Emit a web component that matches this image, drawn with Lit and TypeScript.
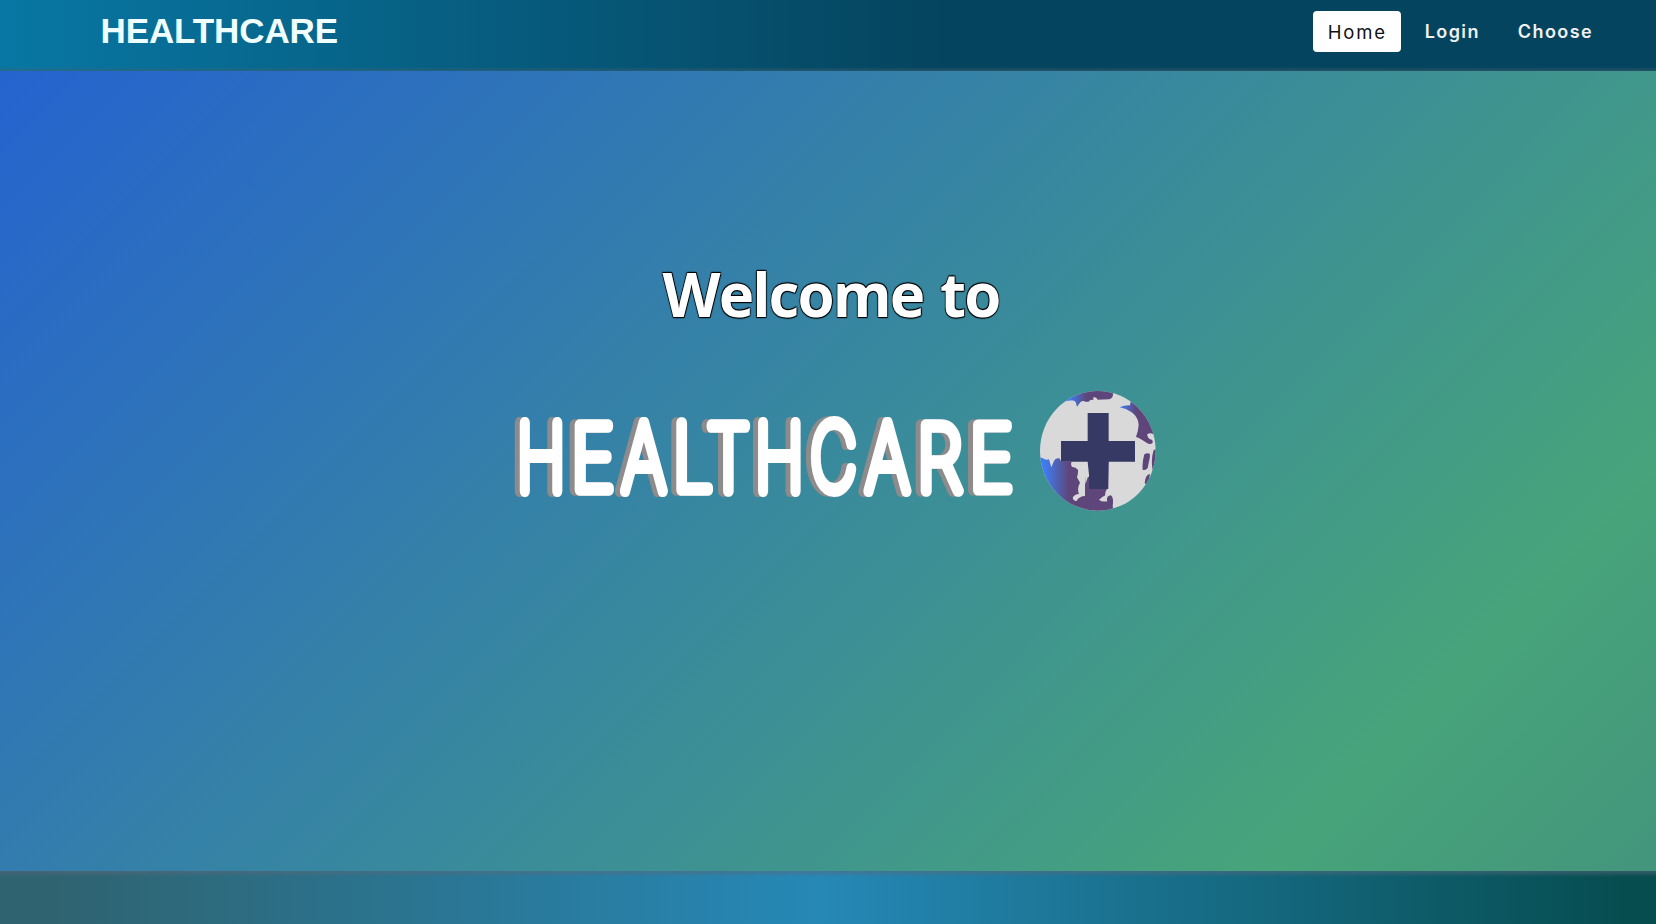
import { LitElement, html, css, svg } from "lit";
import { customElement } from "lit/decorators.js";

// [letter, left, right, top, bottom] outer edges inside the 510 x 100 mark
const LETTERS: [string, number, number, number, number][] = [
  ["H", 8.6, 53.8, 11.3, 90.4], ["E", 64, 105, 13.5, 88.9], ["A", 108.8, 158.9, 11.3, 90.4],
  ["L", 165.3, 203.6, 11.3, 88.9], ["T", 195.7, 241.2, 13.5, 90.4], ["H", 247, 292.2, 11.3, 90.4],
  ["C", 299.8, 347.7, 11.3, 90.4], ["A", 352.3, 402.5, 11.3, 90.4], ["R", 410, 454.5, 13.5, 90.4],
  ["E", 462.3, 503.7, 13.5, 88.9],
];
const STROKE = 10.4;
const SIZE = 100;

@customElement("word-mark")
class WordMark extends LitElement {
  static styles = css`
    :host { display: block; width: 510px; height: 100px; }
    svg { display: block; overflow: visible; filter: drop-shadow(-5px 0 0 #8d8b8b); }
    text { font: 100 100px Inter, sans-serif; fill: #fff; stroke: #fff; stroke-width: 10.4px; stroke-linejoin: round; stroke-linecap: round; vector-effect: non-scaling-stroke; }
  `;
  render() {
    const ctx = document.createElement("canvas").getContext("2d")!;
    ctx.font = `100 ${SIZE}px Inter, sans-serif`;
    const h = STROKE / 2;
    return html`<svg width="510" height="100" viewBox="0 0 510 100">${LETTERS.map(([c, l, r, t, b]) => {
      const m = ctx.measureText(c);
      const sx = (r - l - STROKE) / (m.actualBoundingBoxRight + m.actualBoundingBoxLeft);
      const sy = (b - t - STROKE) / (m.actualBoundingBoxAscent + m.actualBoundingBoxDescent);
      const x = l + h + m.actualBoundingBoxLeft * sx;
      const y = b - h - m.actualBoundingBoxDescent * sy;
      return svg`<text transform="translate(${x} ${y}) scale(${sx} ${sy})">${c}</text>`;
    })}</svg>`;
  }
}

@customElement("globe-mark")
class GlobeMark extends LitElement {
  static styles = css`:host { display: block; } svg { display: block; }`;
  render() {
    return html`<svg width="136" height="140" viewBox="0 0 408 420">
      <defs>
        <clipPath id="disc"><ellipse cx="203.500" cy="212.500" rx="173.500" ry="179.500"/></clipPath>
        <linearGradient id="l" gradientUnits="userSpaceOnUse" x1="45" y1="0" x2="118" y2="0"><stop offset="0" stop-color="#407bf0"/><stop offset="1" stop-color="#5e467a"/></linearGradient>
        <linearGradient id="t" gradientUnits="userSpaceOnUse" x1="120" y1="0" x2="170" y2="0"><stop offset="0" stop-color="#407bf0"/><stop offset="1" stop-color="#5e467a"/></linearGradient>
        <linearGradient id="r" gradientUnits="userSpaceOnUse" x1="272" y1="0" x2="318" y2="0"><stop offset="0" stop-color="#407bf0"/><stop offset="1" stop-color="#5e467a"/></linearGradient>
      </defs>
      <ellipse cx="203.500" cy="212.500" rx="173.500" ry="179.500" fill="#d9d9d9"/>
      <g clip-path="url(#disc)">
        <path fill="url(#t)" d="M105 64 C122 61 131 60 137 66 L141 80 L151 67 Q158 60 166 65 L176 65 Q180 58 190 60 L190 52 Q199 50 203 59 L238 58 Q249 55 249 43 L246 25 H120Z"/>
        <path fill="url(#r)" d="M269 82 Q280 76 300 76 L302 65 H345 L385 160 L369 162 Q359 157 351 164 Q354 174 360 178 Q369 178 368 188 Q362 195 352 190 C342 183 329 174 318 171 Q325 152 326 134 Q324 111 305 97 Q288 85 269 82Z"/>
        <path fill="#5e467a" d="M343 223 Q352 217 359 221 Q361 229 358 239 L353 264 Q346 273 338 269 Q336 247 343 223Z M371 210 L382 206 V270 H368 Q362 238 371 210Z M360 282 Q346 284 344 309 Q349 317 355 309Z"/>
        <path fill="url(#l)" d="M25 230 L39 235 Q47 242 57 238 L64 262 L71 245 Q75 234 88 235 L94 245 H125 Q121 253 126 261 Q136 260 144 269 Q145 281 141 292 L150 308 Q140 325 147 342 Q132 343 128 354 Q132 366 140 362 Q149 348 165 348 L165 290 H178 V246 H235 V327 H231 Q224 336 226 346 Q214 352 207 359 Q216 367 232 364 Q227 349 242 346 Q252 351 248 378 L252 398 H100 L25 320Z"/>
        <path fill="#d9d9d9" d="M164 246 H177 V288 Q172 291 170 302 L166 312Z"/>
      </g>
      <path fill="#363963" d="M173 99 H236 V183 H315 V245 H236 L234 327 H177 V284 L173 245 H93 V183 H173Z"/>
    </svg>`;
  }
}

@customElement("app-root")
class AppRoot extends LitElement {
  static styles = css`
    :host { display: flex; flex-direction: column; width: 100%; height: 924px; overflow: hidden; font-family: Inter, sans-serif; }
    header { box-sizing: border-box; height: 71px; flex: none; display: flex; justify-content: space-between; padding: 11px 49px 0 100.5px;
      background: linear-gradient(transparent 67px, #41616e88 71px), linear-gradient(90deg, #0877a3 0%, #05445e 57%); }
    .brand { font: 700 35px/39px "Liberation Sans", sans-serif; color: #f0ffff; letter-spacing: -0.1px; }
    nav { display: flex; align-items: flex-start; gap: 9px; }
    nav a { box-sizing: border-box; height: 41px; line-height: 42px; padding: 0 14px 0 15px; border-radius: 4px; font-size: 18px; font-weight: 600; letter-spacing: 1.4px; color: #f0f0f0; white-space: nowrap; }
    nav a.on { background: #fff; color: #111; font-weight: 400; font-size: 18.5px; letter-spacing: 1.8px; }
    main { flex: none; height: 800px; display: flex; flex-direction: column; align-items: center; background: linear-gradient(135deg, #2563cf 0%, #47a47a 84%, #43957c 100%); }
    h1 { margin: 182px 0 0 6px; font: 700 60px/82px "Open Sans", "Noto Sans", sans-serif; letter-spacing: -1.9px; word-spacing: 3px; color: #fff; text-shadow: 0.6px 0.6px 1px #000, -0.6px 0.6px 1px #000, 0.6px -0.6px 1px #000, -0.6px -0.6px 1px #000; white-space: nowrap; }
    .logo { display: flex; margin-top: 45px; width: 656px; align-self: flex-start; margin-left: 510px; }
    .logo word-mark { margin-top: 26px; margin-right: 10px; }
    footer { flex: 1; background: linear-gradient(#5a677a88 0, #5a677a66 2px, transparent 6px), linear-gradient(90deg, #2f6370 0%, #2f6370 3%, #2688b6 49.5%, #064d50 98%); }
  `;
  render() {
    return html`
      <header><div class="brand">HEALTHCARE</div>
        <nav><a class="on">Home</a><a>Login</a><a>Choose</a></nav></header>
      <main><h1>Welcome to</h1><div class="logo"><word-mark></word-mark><globe-mark></globe-mark></div></main>
      <footer></footer>`;
  }
}
